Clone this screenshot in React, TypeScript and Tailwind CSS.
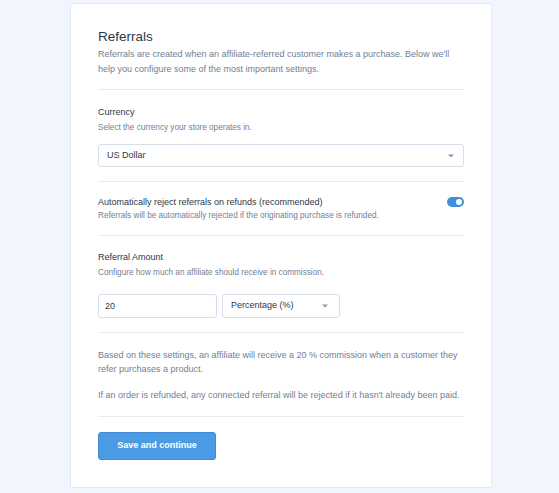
import { useState } from 'react';

function Chevron() {
  return (
    <svg width="6" height="4" viewBox="0 0 6 4" className="text-[#8a94a6]">
      <path d="M0 0.5h6L3 3.5z" fill="currentColor" />
    </svg>
  );
}

export default function App() {
  const [amount, setAmount] = useState('20');
  const [reject, setReject] = useState(true);
  const summary = `Based on these settings, an affiliate will receive a ${amount} % commission when a customer they refer purchases a product.`;

  return (
    <div className="min-h-[493px] bg-[#f1f5fd] pt-[3px] pb-[5px] font-['Liberation_Sans',Arial,sans-serif]">
      <div className="ml-[70px] w-[422px] bg-white border border-[#e3e9f3] rounded-[2px] px-[27px] pt-[23px] pb-[27px]">
        <div className="pb-[12px] border-b border-[#e6ebf3]">
          <h1 className="text-[13.5px] leading-[20px] text-[#2d3748]">Referrals</h1>
          <p className="text-[9px] leading-[15px] text-[#718096]">
            Referrals are created when an affiliate-referred customer makes a purchase. Below we'll help you configure some of the most important settings.
          </p>
        </div>

        <div className="pt-[15px] pb-[14px] border-b border-[#e6ebf3]">
          <h2 className="text-[9px] leading-[14px] text-[#2d3748]">Currency</h2>
          <p className="mt-[3px] text-[8.2px] leading-[12px] text-[#718096]">Select the currency your store operates in.</p>
          <div className="mt-[10px] h-[23px] flex items-center justify-between border border-[#d7dfea] rounded-[3px] pl-[8px] pr-[9px]">
            <span className="text-[9px] text-[#2d3748]">US Dollar</span>
            <Chevron />
          </div>
        </div>

        <div className="pt-[13px] pb-[13px] border-b border-[#e6ebf3] flex items-start justify-between">
          <div>
            <h2 className="text-[9px] leading-[14px] text-[#2d3748]">Automatically reject referrals on refunds (recommended)</h2>
            <p className="mt-[1px] text-[8.2px] leading-[12px] text-[#718096]">Referrals will be automatically rejected if the originating purchase is refunded.</p>
          </div>
          <button
            onClick={() => setReject(!reject)}
            className={`mt-[2px] w-[17px] h-[10px] rounded-full flex items-center px-[2px] ${reject ? 'bg-[#3f8fdf] justify-end' : 'bg-gray-300 justify-start'}`}
          >
            <span className="w-[6px] h-[6px] rounded-full bg-white" />
          </button>
        </div>

        <div className="pt-[14px] pb-[14px] border-b border-[#e6ebf3]">
          <h2 className="text-[9px] leading-[14px] text-[#2d3748]">Referral Amount</h2>
          <p className="mt-[3px] text-[8.2px] leading-[12px] text-[#718096]">Configure how much an affiliate should receive in commission.</p>
          <div className="mt-[15px] flex gap-[5px]">
            <input
              value={amount}
              onChange={(e) => setAmount(e.target.value)}
              className="w-[119px] h-[24px] border border-[#d7dfea] rounded-[3px] px-[6px] text-[9px] text-[#2d3748] outline-none"
            />
            <div className="w-[118px] h-[24px] flex items-center justify-between border border-[#d7dfea] rounded-[3px] pl-[8px] pr-[11px]">
              <span className="text-[9px] text-[#2d3748]">Percentage (%)</span>
              <Chevron />
            </div>
          </div>
        </div>

        <div className="pt-[15px] pb-[14px] border-b border-[#e6ebf3] text-[9px] leading-[14px] text-[#718096]">
          <p>{summary}</p>
          <p className="mt-[12px]">If an order is refunded, any connected referral will be rejected if it hasn't already been paid.</p>
        </div>

        <button className="mt-[15px] w-[118px] h-[28px] rounded-[3px] bg-[#4a9be4] border border-[#3d8ad6] text-white text-[9px] font-bold">
          Save and continue
        </button>
      </div>
    </div>
  );
}
